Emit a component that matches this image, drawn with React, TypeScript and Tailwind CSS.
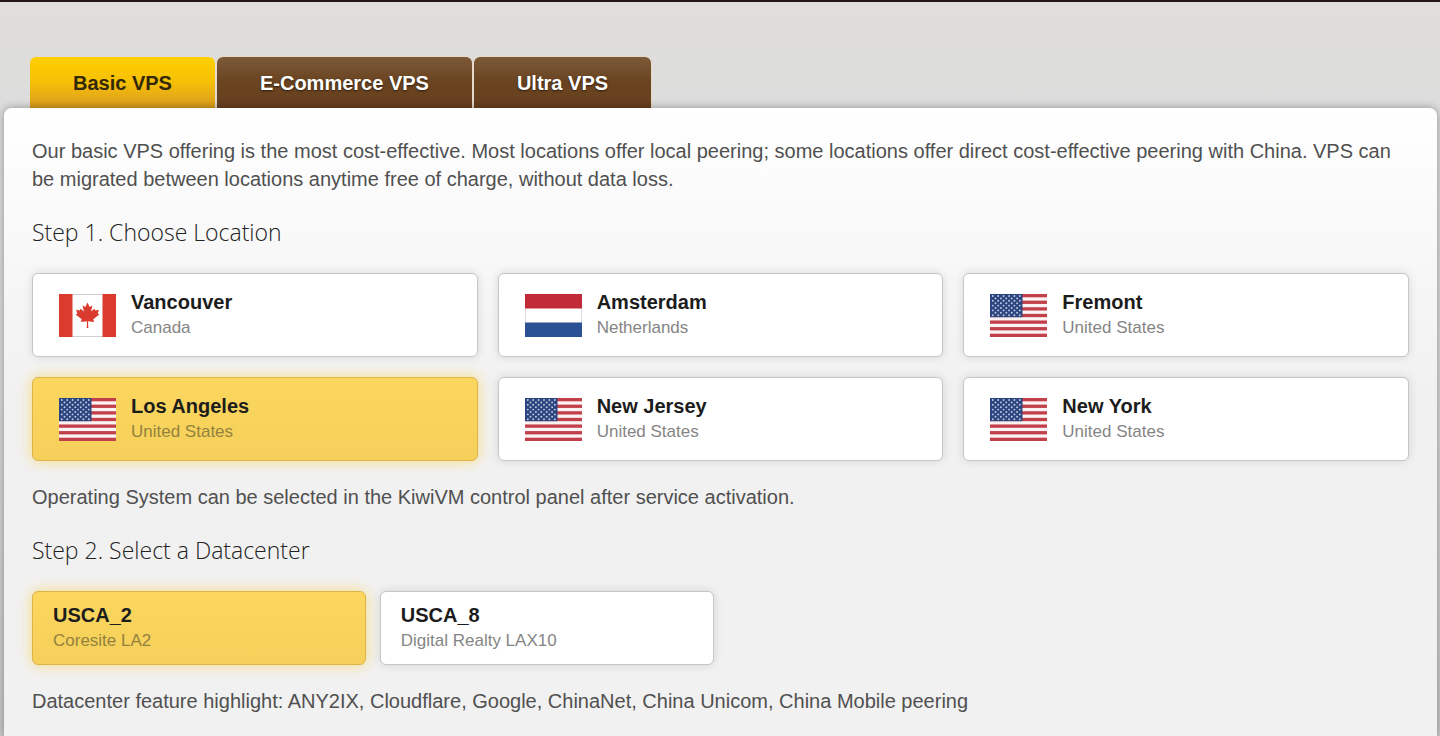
import { useState } from "react";
import clsx from "clsx";

const tabs = ["Basic VPS", "E-Commerce VPS", "Ultra VPS"];

const locations = [
  { city: "Vancouver", country: "Canada" },
  { city: "Amsterdam", country: "Netherlands" },
  { city: "Fremont", country: "United States" },
  { city: "Los Angeles", country: "United States" },
  { city: "New Jersey", country: "United States" },
  { city: "New York", country: "United States" },
];

const datacenters = [
  { code: "USCA_2", name: "Coresite LA2" },
  { code: "USCA_8", name: "Digital Realty LAX10" },
];

const stripes = [0, 2, 4, 6, 8, 10, 12];
const starRows = [0, 1, 2, 3, 4, 5, 6, 7, 8];

function CanadaFlag() {
  return (
    <svg viewBox="0 0 57 43" className="w-[57px] h-[43px] shrink-0" aria-hidden="true">
      <rect width="57" height="43" fill="#fff" />
      <path d="M13 .5H44M13 42.5H44" stroke="#cfcfcf" />
      <rect width="13.5" height="43" fill="#db3a2e" />
      <rect x="43.5" width="13.5" height="43" fill="#db3a2e" />
      <path
        d="M28.5 8.5l-2.2 4.4-2.7-1.3 1.3 6-3.4-2.9-.8 1.8-3.6-.7 1.2 3.8-1.6.9 6 4.8-.8 2.7 6-.8v4.8l-.4 2h2l-.4-2v-4.8l6 .8-.8-2.7 6-4.8-1.6-.9 1.2-3.8-3.6.7-.8-1.8-3.4 2.9 1.3-6-2.7 1.3z"
        fill="#db3a2e"
      />
    </svg>
  );
}

function NetherlandsFlag() {
  return (
    <svg viewBox="0 0 57 43" className="w-[57px] h-[43px] shrink-0" aria-hidden="true">
      <rect x=".5" y=".5" width="56" height="42" fill="#fff" stroke="#dcdcdc" />
      <rect width="57" height="14.5" fill="#c22a3a" />
      <rect y="28.5" width="57" height="14.5" fill="#2a5193" />
    </svg>
  );
}

function UsaFlag() {
  return (
    <svg viewBox="0 0 57 43" className="w-[57px] h-[43px] shrink-0" aria-hidden="true">
      <rect width="57" height="43" fill="#fbf3f3" />
      {stripes.map((n) => (
        <rect key={n} y={(n * 43) / 13} width="57" height={43 / 13} fill="#c1404a" />
      ))}
      <rect width="32.5" height="23.2" fill="#2c4580" />
      {starRows.map((row) =>
        Array.from({ length: row % 2 ? 5 : 6 }, (_, i) => (
          <circle
            key={`${row}-${i}`}
            cx={(row % 2 ? 5.5 : 2.8) + i * 5.4}
            cy={2 + row * 2.4}
            r="0.95"
            fill="#c3cde0"
          />
        ))
      )}
    </svg>
  );
}

function Flag({ country }: { country: string }) {
  if (country === "Canada") return <CanadaFlag />;
  if (country === "Netherlands") return <NetherlandsFlag />;
  return <UsaFlag />;
}

function cardStyle(active: boolean) {
  return clsx(
    "flex items-center rounded-md border text-left cursor-pointer",
    active
      ? "border-[#dcb548] bg-gradient-to-b from-[#fbd75f] to-[#f5d05a] shadow-[0_0_14px_rgba(255,205,50,0.6)]"
      : "border-[#c6c6c6] bg-white shadow-[0_0_10px_rgba(0,0,0,0.12)]"
  );
}

function CardText({ title, desc, active }: { title: string; desc: string; active: boolean }) {
  return (
    <span className="block leading-[26px]">
      <span className="block text-[20px] font-bold text-[#1c1c1c]">{title}</span>
      <span className={clsx("block text-[17px]", active ? "text-[#94813f]" : "text-[#858585]")}>
        {desc}
      </span>
    </span>
  );
}

export default function App() {
  const [tab, setTab] = useState("Basic VPS");
  const [city, setCity] = useState("Los Angeles");
  const [datacenter, setDatacenter] = useState("USCA_2");

  return (
    <div className="flex min-h-screen flex-col border-t-2 border-[#241416] bg-gradient-to-b from-[#dfdedd] via-[#d9d9d9] to-[#c8c8c8] font-['Liberation_Sans',Arial,sans-serif] text-[#505050]">
      {/* Plan tabs */}
      <div role="tablist" className="flex gap-0.5 px-[30px] pt-[55px]">
        {tabs.map((name) => (
          <button
            key={name}
            type="button"
            role="tab"
            aria-selected={tab === name}
            onClick={() => setTab(name)}
            className={clsx(
              "h-[51px] rounded-t-md px-[43px] text-[20px] font-bold cursor-pointer",
              tab === name
                ? "bg-gradient-to-b from-[#ffd000] via-[#f6bf06] to-[#d99b1c] text-[#332808]"
                : "bg-gradient-to-b from-[#7b5a38] via-[#6a4320] to-[#67401f] text-white shadow-[0_0_0_1px_#e6d9c9] [text-shadow:0_1px_2px_rgba(0,0,0,0.6)]"
            )}
          >
            {name}
          </button>
        ))}
      </div>

      {/* Panel */}
      <main className="relative ml-1 mr-[3px] flex-1 rounded-t-lg bg-gradient-to-b from-white via-[#f1f1f1] via-45% to-[#f1f1f1] px-7 pt-[29px] pb-5 shadow-[0_0_8px_rgba(0,0,0,0.35)]">
        <p className="text-[20px] leading-7">
          Our basic VPS offering is the most cost-effective. Most locations offer local peering;
          some locations offer direct cost-effective peering with China. VPS can be migrated
          between locations anytime free of charge, without data loss.
        </p>

        <h2 className="mt-6 font-['Open_Sans',sans-serif] text-[23px] leading-[30px] font-light text-[#222]">
          Step 1. Choose Location
        </h2>
        <div className="mt-[26px] grid grid-cols-3 gap-5">
          {locations.map((loc) => (
            <button
              key={loc.city}
              type="button"
              aria-pressed={city === loc.city}
              onClick={() => setCity(loc.city)}
              className={clsx(cardStyle(city === loc.city), "h-[84px] gap-[15px] px-[26px]")}
            >
              <Flag country={loc.country} />
              <CardText title={loc.city} desc={loc.country} active={city === loc.city} />
            </button>
          ))}
        </div>
        <p className="mt-[22px] text-[20px] leading-7">
          Operating System can be selected in the KiwiVM control panel after service activation.
        </p>

        <h2 className="mt-6 font-['Open_Sans',sans-serif] text-[23px] leading-[30px] font-light text-[#222]">
          Step 2. Select a Datacenter
        </h2>
        <div className="mt-[26px] grid grid-cols-4 gap-[14px]">
          {datacenters.map((dc) => (
            <button
              key={dc.code}
              type="button"
              aria-pressed={datacenter === dc.code}
              onClick={() => setDatacenter(dc.code)}
              className={clsx(cardStyle(datacenter === dc.code), "h-[74px] px-5")}
            >
              <CardText title={dc.code} desc={dc.name} active={datacenter === dc.code} />
            </button>
          ))}
        </div>
        <p className="mt-[22px] text-[20px] leading-7">
          Datacenter feature highlight: ANY2IX, Cloudflare, Google, ChinaNet, China Unicom, China
          Mobile peering
        </p>
      </main>
    </div>
  );
}
